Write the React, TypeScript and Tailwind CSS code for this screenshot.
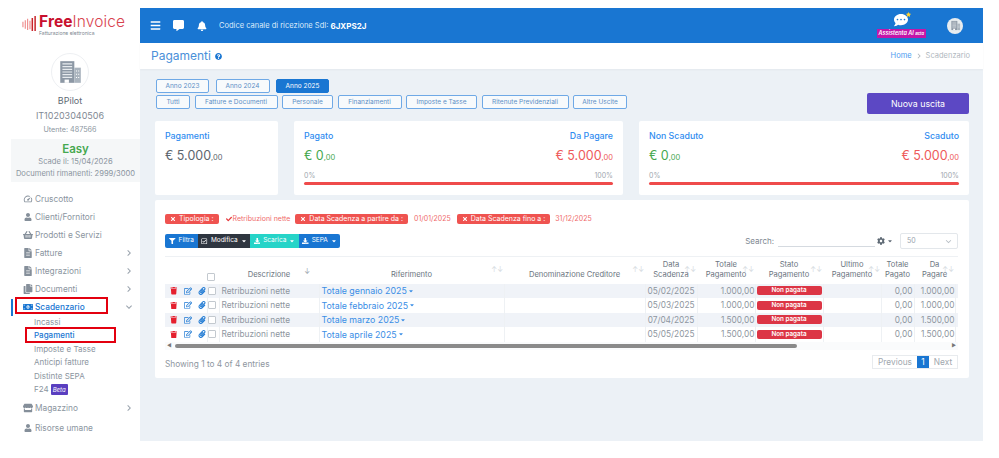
import React from "react";
import {
  FaBars, FaCommentAlt, FaBell, FaQuestionCircle, FaTimes, FaCheck, FaFilter, FaRegCheckSquare, FaDownload,
  FaCog, FaTrash, FaRegEdit, FaPaperclip, FaUser, FaShoppingBasket, FaFileAlt, FaCopy, FaMoneyBillAlt, FaStore, FaCaretDown, FaCommentDots, FaStar,
} from "react-icons/fa";
import { MdSpeed, MdChevronRight, MdExpandMore } from "react-icons/md";

function Building({ className }: { className?: string }) {
  return (
    <svg viewBox="0 0 24 24" className={className} fill="none">
      <path d="M3 2h13v20H3z" fill="#8d98a5" />
      <path d="M5 4.5h9M5 7h9M5 9.5h9M5 12h9M5 14.5h9M5 17h9" stroke="#e7ebef" strokeWidth="1.1" />
      <path d="M16 8h6v14h-6z" fill="#aab4be" />
      <path d="M18 10.500v1M18 13.500v1M18 16.500v1M20 10.500v1M20 13.500v1M20 16.500v1" stroke="#fff" strokeWidth="1" />
      <path d="M7 22v-3h4v3z" fill="#fff" />
    </svg>
  );
}

function NavItem({ icon, label, arrow, active, box }: { icon: React.ReactNode; label: string; arrow?: "r" | "d"; active?: boolean; box?: boolean }) {
  return (
    <div className={`relative h-[18px] flex items-center pl-[21px] pr-[5px] ${active ? "text-[#1976d2] font-medium" : "text-[#8b95a0]"}`}>
      {active && <span className="absolute left-[11px] top-[1px] h-[17px] w-[1.5px] bg-[#1976d2]" />}
      <span className={`w-[14px] flex justify-center text-[10px] ${active ? "text-[#1976d2]" : "text-[#858f9a]"}`}>{icon}</span>
      <span className="ml-[0px] pl-[0px] text-[8.3px] ml-[0.5px] flex-1">{label}</span>
      {arrow === "r" && <MdChevronRight className="text-[12px] text-[#9aa3ad]" />}
      {arrow === "d" && <MdExpandMore className="text-[12px] text-[#9aa3ad]" />}
      {box && <span className="absolute left-[15px] top-[-1.500px] w-[93px] h-[17px] border-2 border-[#e3000f]" />}
    </div>
  );
}

function SubItem({ label, active, box, children }: { label: string; active?: boolean; box?: boolean; children?: React.ReactNode }) {
  return (
    <div className={`relative h-[13.500px] flex items-center pl-[34px] text-[8px] ${active ? "text-[#1976d2] font-medium" : "text-[#8b95a0]"}`}>
      {label}
      {children}
      {box && <span className="absolute left-[25px] top-[-1.500px] w-[91px] h-[16px] border-2 border-[#e3000f]" />}
    </div>
  );
}

function Sidebar() {
  return (
    <aside className="w-[140px] h-[441px] shrink-0 bg-white overflow-hidden">
      <div className="h-[42px] pt-[14px] pl-[22px] flex items-start">
        <svg viewBox="0 0 16 18" className="w-[15px] h-[17px] mt-[1px]">
          <path d="M1 7v6M3.500 5.500v9M6 4v12M8.500 6v9" stroke="#ee8a8a" strokeWidth="1.200" />
          <path d="M11 3v14M14 1v16" stroke="#c9252c" strokeWidth="1.600" />
        </svg>
        <div className="ml-[2px] leading-none">
          <div className="text-[15.500px] leading-[15px] text-[#c8102e] whitespace-nowrap tracking-[0.1px]"><span className="font-bold">Free</span><span className="font-light text-[#d8434f]">Invoice</span></div>
          <div className="text-[5px] leading-[6px] text-[#7d8791] mt-[0.500px] whitespace-nowrap">Fatturazione elettronica</div>
        </div>
      </div>
      <div className="flex justify-center mt-[11px]">
        <div className="w-[38px] h-[38px] rounded-full border border-[#eef0f3] flex items-center justify-center"><Building className="w-[26px] h-[26px]" /></div>
      </div>
      <div className="text-center text-[9px] leading-[12px] text-[#5f6a75] mt-[4px]">BPilot</div>
      <div className="text-center text-[9px] leading-[12px] text-[#7f8994] mt-[3px]">IT10203040506</div>
      <div className="text-center text-[7.200px] leading-[10px] text-[#8b95a0] mt-[3px]">Utente: 487566</div>
      <div className="ml-[11px] w-[129px] h-[43px] mt-[4px] bg-[#f5f7f8] text-center pt-[3px]">
        <div className="text-[11.500px] leading-[14px] font-semibold text-[#46a84f]">Easy</div>
        <div className="text-[7.600px] leading-[12px] text-[#8b95a0]">Scade il: 15/04/2026</div>
        <div className="text-[7.600px] leading-[11px] text-[#8b95a0] whitespace-nowrap">Documenti rimanenti: 2999/3000</div>
      </div>
      <div className="mt-[8px]">
        <NavItem icon={<MdSpeed />} label="Cruscotto" />
        <NavItem icon={<FaUser className="text-[8px]" />} label="Clienti/Fornitori" />
        <NavItem icon={<FaShoppingBasket />} label="Prodotti e Servizi" />
        <NavItem icon={<FaFileAlt />} label="Fatture" arrow="r" />
        <NavItem icon={<FaFileAlt />} label="Integrazioni" arrow="r" />
        <NavItem icon={<FaCopy />} label="Documenti" arrow="r" />
        <NavItem icon={<FaMoneyBillAlt />} label="Scadenzario" arrow="d" active box />
        <div className="mt-[-1px]">
          <SubItem label="Incassi" />
          <SubItem label="Pagamenti" active box />
          <SubItem label="Imposte e Tasse" />
          <SubItem label="Anticipi fatture" />
          <SubItem label="Distinte SEPA" />
          <SubItem label="F24"><span className="ml-[2px] bg-[#5a3fc0] text-white text-[6px] italic px-[2px] leading-[11px] rounded-[1px]">Beta</span></SubItem>
        </div>
        <div className="mt-[3px]"><NavItem icon={<FaStore />} label="Magazzino" arrow="r" /></div>
        <div className="mt-[2px]"><NavItem icon={<FaUser className="text-[8px]" />} label="Risorse umane" /></div>
      </div>
    </aside>
  );
}

function Topbar() {
  return (
    <div className="h-[35px] bg-[#1976d2] flex items-center text-white pl-[10px] pr-[20px] shrink-0">
      <FaBars className="text-[11px]" />
      <FaCommentAlt className="text-[11px] ml-[12px]" />
      <FaBell className="text-[10px] ml-[13px]" />
      <span className="text-[7.500px] ml-[12px] text-[#dcebfa]">Codice canale di ricezione SdI:</span>
      <span className="text-[8px] font-bold ml-[2px]">6JXPS2J</span>
      <div className="ml-auto flex flex-col items-center relative mr-[21px]">
        <div className="relative"><FaCommentDots className="text-[14px] text-white" /><FaStar className="absolute -right-[3px] -top-[1px] text-[5px] text-[#ffd02f]" /></div>
        <span className="mt-[2px] bg-[#c516a8] text-[5.500px] leading-[8px] px-[2px] italic font-semibold whitespace-nowrap">Assistenta AI <span className="text-[4px]">Beta</span></span>
      </div>
      <div className="w-[16px] h-[16px] rounded-full bg-[#e8ecef] flex items-center justify-center"><Building className="w-[11px] h-[11px]" /></div>
    </div>
  );
}

function Pill({ label, on, w, className = "" }: { label: string; on?: boolean; w: string; className?: string }) {
  return <button className={`h-[13.500px] ${w} rounded-[2px] border text-[6.500px] leading-none ${on ? "bg-[#1976d2] border-[#1976d2] text-white" : "bg-[#f7fafc] border-[#6fa9e6] text-[#5d8fc5]"} ${className}`}>{label}</button>;
}

function Money({ value, cents, color, sub }: { value: string; cents: string; color: string; sub?: string }) {
  return (
    <div className={`text-[12.500px] leading-[16px] ${color} whitespace-nowrap`}>{value}<span className="text-[7.500px]">{cents}</span></div>
  );
}

function SplitCard({ l, r, w }: { l: string; r: string; w: string }) {
  return (
    <div className={`${w} h-[74px] bg-white rounded-[2px] px-[10px] pt-[9px]`}>
      <div className="flex justify-between text-[8.800px] leading-[12px] font-medium text-[#2f8cf0]"><span>{l}</span><span>{r}</span></div>
      <div className="flex justify-between mt-[6px]">
        <Money value="€ 0" cents=",00" color="text-[#46a84f]" />
        <Money value="€ 5.000" cents=",00" color="text-[#ee5a5a]" />
      </div>
      <div className="flex justify-between text-[7px] leading-[9px] text-[#a0a7ae] mt-[5px]"><span>0%</span><span>100%</span></div>
      <div className="h-[3px] rounded-full bg-[#ef4b4b] mt-[1.500px]" />
    </div>
  );
}

function Tag({ label }: { label: string }) {
  return (
    <span className="h-[10px] flex items-center bg-[#ef5350] text-white text-[7px] px-[5px] rounded-[2px] whitespace-nowrap gap-[3px]"><FaTimes className="text-[6px]" />{label}</span>
  );
}

function ToolBtn({ icon, label, color, w, caret }: { icon: React.ReactNode; label: string; color: string; w: string; caret?: boolean }) {
  return (
    <button className={`${w} h-[14px] ${color} text-white text-[6.500px] flex items-center justify-center gap-[3px]`}>
      <span className="text-[6.500px]">{icon}</span>{label}{caret && <FaCaretDown className="text-[6px]" />}
    </button>
  );
}

const rows = [
  ["Totale gennaio 2025", "05/02/2025", "1.000,00", "1.000,00 ."],
  ["Totale febbraio 2025", "05/03/2025", "1.000,00", "1.000,00"],
  ["Totale marzo 2025", "07/04/2025", "1.500,00", "1.500,00"],
  ["Totale aprile 2025", "05/05/2025", "1.500,00", "1.500,00"],
];

function Sort({ className = "" }: { className?: string }) {
  return <span className={`absolute right-[1px] top-[9px] text-[7px] leading-none text-[#d5dae0] ${className}`}>↑↓</span>;
}

function Th({ children, className = "" }: { children: React.ReactNode; className?: string }) {
  return <th className={`relative font-normal align-bottom pb-[3px] text-[7.600px] leading-[10.500px] text-[#6b7580] text-center ${className}`}>{children}</th>;
}

function DataTable() {
  const td = "border-r border-[#eef1f4] text-[8.300px] text-[#8e96a0] p-0 h-[14.500px] overflow-hidden whitespace-nowrap";
  return (
    <div className="w-[793px] mt-[7px] overflow-hidden">
      <table className="table-fixed border-collapse w-[800px]">
        <colgroup>
          <col className="w-[42px]" /><col className="w-[12px]" /><col className="w-[100px]" /><col className="w-[185px]" /><col className="w-[141px]" />
          <col className="w-[52px]" /><col className="w-[58px]" /><col className="w-[68px]" /><col className="w-[58px]" /><col className="w-[33px]" /><col className="w-[41px]" /><col className="w-[10px]" />
        </colgroup>
        <thead>
          <tr className="h-[27px] border-t border-[#eef1f4]">
            <Th>{""}</Th>
            <Th><span className="block w-[8px] h-[8px] border border-[#c3c9cf] rounded-[1px] mb-[0px]" /></Th>
            <Th>Descrizione<span className="absolute right-[9px] top-[10px] text-[7px] text-[#9aa3ad]">↓</span></Th>
            <Th>Riferimento<Sort /></Th>
            <Th>Denominazione Creditore<Sort /></Th>
            <Th>Data<br />Scadenza<Sort /></Th>
            <Th>Totale<br />Pagamento<Sort /></Th>
            <Th>Stato<br />Pagamento<Sort /></Th>
            <Th>Ultimo<br />Pagamento<Sort /></Th>
            <Th>Totale<br />Pagato</Th>
            <Th>Da<br />Pagare<Sort /></Th>
            <Th>{""}</Th>
          </tr>
        </thead>
        <tbody>
          {rows.map((r, i) => (
            <tr key={r[0]} className={i % 2 === 0 ? "bg-[#f0f3f8]" : "bg-white"}>
              <td className={td}><div className="flex items-center pl-[5px] gap-[6px] text-[8px]"><FaTrash className="text-[#e5202e] text-[7.500px]" /><FaRegEdit className="text-[#1976d2]" /><FaPaperclip className="text-[#1976d2]" /></div></td>
              <td className={td}><span className="block w-[8px] h-[8px] border border-[#c3c9cf] rounded-[1px] bg-white" /></td>
              <td className={`${td} pl-[2px]`}>Retribuzioni nette</td>
              <td className={`${td} pl-[2px] text-[#3a8ee6]`}><span className="inline-flex items-center gap-[1px] text-[#3a8ee6] text-[8.800px]">{r[0]}<FaCaretDown className="text-[6px]" /></span></td>
              <td className={td} />
              <td className={`${td} text-center`}>{r[1]}</td>
              <td className={`${td} text-right`}>{r[2]}</td>
              <td className={td}><div className="mx-[1px] h-[9px] rounded-[2px] bg-[#dc3545] text-white text-[6.300px] font-semibold leading-[9px] text-center">Non pagata</div></td>
              <td className={td} />
              <td className={`${td} text-right pr-[1px]`}>0,00</td>
              <td className={`${td} text-right`}>{r[3].replace(" .", "")}</td>
              <td className={td} />
            </tr>
          ))}
        </tbody>
      </table>
      <div className="flex items-center h-[8px] gap-[1px] bg-[#fafbfc]">
        <span className="text-[5px] text-[#777] ml-[2px]">◀</span>
        <div className="w-[622px] ml-[2px] h-[4px] rounded-full bg-[#8a8a8a]" />
        <span className="ml-auto text-[5px] text-[#777] mr-[2px]">▶</span>
      </div>
    </div>
  );
}

function Main() {
  return (
    <main className="flex-1 pt-[8px] flex flex-col h-[441px]">
      <Topbar />
      <div className="h-[26px] bg-white flex items-center pl-[11px] pr-[13px] shadow-[0_1px_2px_rgba(0,0,0,0.04)] relative shrink-0">
        <span className="text-[12px] text-[#4a90d9]">Pagamenti</span>
        <FaQuestionCircle className="text-[7px] text-[#1976d2] ml-[4px]" />
        <span className="ml-auto text-[7.500px] text-[#4a9af0]">Home</span>
        <MdChevronRight className="mx-[2px] text-[10px] text-[#aeb5bc]" />
        <span className="text-[7.500px] text-[#b0b7be]">Scadenzario</span>
      </div>
      <div className="flex-1 bg-[#ecf1f6] pl-[15px] pr-[14px] pt-[10px]">
        <div className="flex items-start">
          <div className="flex-1 pl-[1px]">
            <div className="flex gap-[6.500px]">
              <Pill label="Anno 2023" w="w-[53px]" /><Pill label="Anno 2024" w="w-[54px]" /><Pill label="Anno 2025" on w="w-[53px]" />
            </div>
            <div className="flex gap-[4.500px] mt-[2.500px]">
              <Pill label="Tutti" w="w-[34px]" /><Pill label="Fatture e Documenti" w="w-[83px]" /><Pill label="Personale" w="w-[51px]" /><Pill label="Finanziamenti" w="w-[64px]" />
              <Pill label="Imposte e Tasse" w="w-[71px]" /><Pill label="Ritenute Previdenziali" w="w-[87px]" /><Pill label="Altre Uscite" w="w-[54px]" />
            </div>
          </div>
          <button className="mt-[14px] w-[102px] h-[21px] rounded-[2px] bg-[#5c48c4] text-white text-[8.800px]">Nuova uscita</button>
        </div>
        <div className="flex gap-[16px] mt-[7px]">
          <div className="w-[123px] h-[74px] bg-white rounded-[2px] px-[10px] pt-[9px]">
            <div className="text-[8.800px] leading-[12px] font-medium text-[#2f8cf0]">Pagamenti</div>
            <div className="mt-[6px]"><Money value="€ 5.000" cents=",00" color="text-[#5c656e]" /></div>
          </div>
          <SplitCard l="Pagato" r="Da Pagare" w="w-[329px]" />
          <SplitCard l="Non Scaduto" r="Scaduto" w="w-[330px]" />
        </div>
        <section className="mt-[5px] w-[814px] h-[178px] bg-white rounded-[2px] pl-[10px] pt-[14px]">
          <div className="flex items-center text-[7px] text-[#ef6b6b] h-[10px] whitespace-nowrap">
            <Tag label="Tipologia :" />
            <FaCheck className="text-[6px] ml-[7px] mr-[1px] text-[#e5383b]" /><span>Retribuzioni nette</span>
            <span className="ml-[5px]"><Tag label="Data Scadenza a partire da :" /></span>
            <span className="ml-[6px]">01/01/2025</span>
            <span className="ml-[6px]"><Tag label="Data Scadenza fino a :" /></span>
            <span className="ml-[5px]">31/12/2025</span>
          </div>
          <div className="flex items-center mt-[9px] pr-[11px]">
            <div className="flex rounded-[2px] overflow-hidden">
              <ToolBtn icon={<FaFilter />} label="Filtra" color="bg-[#1976d2]" w="w-[33px]" />
              <ToolBtn icon={<FaRegCheckSquare />} label="Modifica" color="bg-[#2f3640]" w="w-[52px]" caret />
              <ToolBtn icon={<FaDownload />} label="Scarica" color="bg-[#26d4c8]" w="w-[49px]" caret />
              <ToolBtn icon={<FaDownload />} label="SEPA" color="bg-[#1976d2]" w="w-[41px]" caret />
            </div>
            <span className="ml-auto text-[8px] text-[#7d8791]">Search:</span>
            <span className="w-[97px] h-[12px] border-b border-[#d5dae0] ml-[4px]" />
            <FaCog className="ml-[2px] text-[8px] text-[#5f6a75]" /><FaCaretDown className="ml-[2px] text-[6px] text-[#5f6a75]" />
            <div className="ml-[7px] w-[58px] h-[16px] border border-[#e3e7eb] rounded-[2px] flex items-center justify-between pl-[6px] pr-[3px] text-[7px] text-[#9aa3ad]">50<MdExpandMore className="text-[11px] text-[#b7bec5]" /></div>
          </div>
          <DataTable />
          <div className="flex items-center mt-[4px] pr-[11px]">
            <span className="text-[8.300px] text-[#8e96a0] mt-[4px]">Showing 1 to 4 of 4 entries</span>
            <div className="ml-auto flex h-[14px] text-[8.300px] border border-[#e8ebee] text-[#a0a7ae]">
              <span className="w-[44px] text-center leading-[12px]">Previous</span>
              <span className="w-[12px] text-center bg-[#1976d2] text-white leading-[12px]">1</span>
              <span className="w-[28px] text-center leading-[12px]">Next</span>
            </div>
          </div>
        </section>
      </div>
    </main>
  );
}

export default function App() {
  return (
    <div className="w-[999px] h-[458px] bg-white overflow-hidden font-['Inter','Noto_Sans',sans-serif]">
      <div className="w-[983px] h-[441px] flex">
        <Sidebar />
        <Main />
      </div>
    </div>
  );
}
